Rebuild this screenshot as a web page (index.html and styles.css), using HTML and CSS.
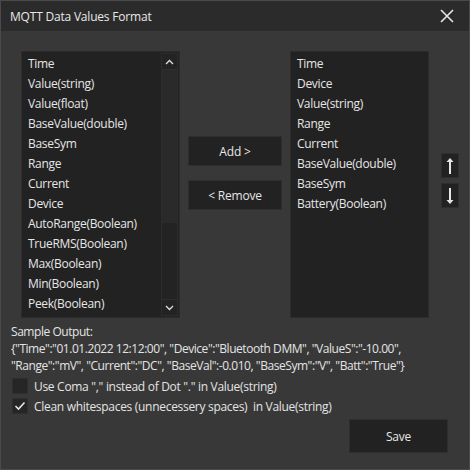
FILE: index.html
```html
<!DOCTYPE html>
<html>
<head>
<meta charset="utf-8">
<link rel="stylesheet" href="styles.css">
</head>
<body>
<div class="window">
  <div class="titlebar">
    <span class="title">MQTT Data Values Format</span>
    <svg class="close" width="14" height="14" viewBox="0 0 14 14"><path d="M1 1 L13 13 M13 1 L1 13" stroke="#e6e6e6" stroke-width="1.6" fill="none"/></svg>
  </div>
  <div class="content">
    <div class="lists">
      <div class="listbox left">
        <div class="items">
          <div class="item">Time</div>
          <div class="item">Value(string)</div>
          <div class="item">Value(float)</div>
          <div class="item">BaseValue(double)</div>
          <div class="item">BaseSym</div>
          <div class="item">Range</div>
          <div class="item">Current</div>
          <div class="item">Device</div>
          <div class="item">AutoRange(Boolean)</div>
          <div class="item">TrueRMS(Boolean)</div>
          <div class="item">Max(Boolean)</div>
          <div class="item">Min(Boolean)</div>
          <div class="item">Peek(Boolean)</div>
        </div>
        <div class="scrollbar">
          <div class="sbtn"><svg width="9" height="6" viewBox="0 0 9 6"><path d="M1 5 L4.5 1.5 L8 5" stroke="#e0e0e0" stroke-width="1.3" fill="none"/></svg></div>
          <div class="thumb"></div>
          <div class="track"></div>
          <div class="sbtn"><svg width="9" height="6" viewBox="0 0 9 6"><path d="M1 1 L4.5 4.5 L8 1" stroke="#e0e0e0" stroke-width="1.3" fill="none"/></svg></div>
        </div>
      </div>
      <div class="midcol">
        <button class="btn">Add &gt;</button>
        <button class="btn">&lt; Remove</button>
      </div>
      <div class="listbox right">
        <div class="items">
          <div class="item">Time</div>
          <div class="item">Device</div>
          <div class="item">Value(string)</div>
          <div class="item">Range</div>
          <div class="item">Current</div>
          <div class="item">BaseValue(double)</div>
          <div class="item">BaseSym</div>
          <div class="item">Battery(Boolean)</div>
        </div>
      </div>
      <div class="movecol">
        <button class="mbtn"><svg width="8" height="18" viewBox="0 0 8 18"><path d="M4 1 L7.5 5 L0.5 5 Z" fill="#e6e6e6"/><rect x="3" y="4" width="2" height="13" fill="#e6e6e6"/></svg></button>
        <button class="mbtn"><svg width="8" height="18" viewBox="0 0 8 18"><path d="M4 17 L7.5 13 L0.5 13 Z" fill="#e6e6e6"/><rect x="3" y="1" width="2" height="13" fill="#e6e6e6"/></svg></button>
      </div>
    </div>
    <div class="sample">
      <div>Sample Output:</div>
      <div>{"Time":"01.01.2022 12:12:00", "Device":"Bluetooth DMM", "ValueS":"-10.00",</div>
      <div>"Range":"mV", "Current":"DC", "BaseVal":-0.010, "BaseSym":"V", "Batt":"True"}</div>
    </div>
    <div class="checks">
      <label class="check"><span class="box"></span><span>Use Coma "," instead of Dot "." in Value(string)</span></label>
      <label class="check"><span class="box"><svg width="12" height="10" viewBox="0 0 12 10"><path d="M1.5 5 L4.5 8 L10.5 1.5" stroke="#e6e6e6" stroke-width="1.6" fill="none"/></svg></span><span>Clean whitespaces (unnecessery spaces)&nbsp; in Value(string)</span></label>
    </div>
    <div class="footer">
      <button class="btn save">Save</button>
    </div>
  </div>
</div>
</body>
</html>
```

FILE: styles.css
```css
* { box-sizing: border-box; }
html, body { margin: 0; padding: 0; background: #383838; }
body {
  font-family: "Open Sans", "Noto Sans", sans-serif;
  font-size: 12px;
  color: #e4e4e4;
}
.window {
  width: 470px;
  height: 470px;
  border: 1px solid #4a4a4a;
  background: #383838;
  display: flex;
  flex-direction: column;
}
.titlebar {
  height: 30px;
  background: #2b2b2b;
  display: flex;
  align-items: center;
  justify-content: space-between;
  padding: 0 15px 0 9px;
  flex: none;
}
.title { font-size: 12px; color: #e8e8e8; letter-spacing: -0.2px; }
.close { display: block; }
.content {
  padding: 20px 0 0 10px;
  display: flex;
  flex-direction: column;
}
.lists {
  display: flex;
  padding-left: 10px;
  height: 267px;
}
.listbox {
  background: #222222;
  border: 1px solid #2c2c2c;
  display: flex;
  height: 267px;
}
.listbox.left { width: 159px; }
.listbox.right { width: 139px; }
.items {
  flex: 1;
  padding: 2px 0 0 6px;
}
.item {
  height: 20px;
  line-height: 20px;
  white-space: nowrap;
  color: #e6e6e6;
  letter-spacing: -0.3px;
}
.scrollbar {
  width: 17px;
  margin: 1px 1px 1px 0;
  border: 1px solid #2c2c2c;
  background: #232323;
  display: flex;
  flex-direction: column;
}
.sbtn {
  height: 16px;
  display: flex;
  align-items: center;
  justify-content: center;
  background: #232323;
  border-bottom: 1px solid #2e2e2e;
}
.sbtn:last-child { border-bottom: none; border-top: 1px solid #2e2e2e; }
.thumb { height: 153px; background: #2a2a2a; }
.track { flex: 1; }
.midcol {
  width: 94px;
  margin: 0 8px;
  padding-top: 85px;
  display: flex;
  flex-direction: column;
  gap: 14px;
}
.btn {
  font-family: inherit;
  font-size: 12px;
  color: #e6e6e6;
  background: #222222;
  border: 1px solid #2e2e2e;
  height: 30px;
  padding: 0;
  letter-spacing: -0.2px;
}
.movecol {
  margin-left: 12px;
  padding-top: 102px;
  display: flex;
  flex-direction: column;
  gap: 5px;
}
.mbtn {
  width: 18px;
  height: 25px;
  padding: 0;
  background: #222222;
  border: 1px solid #2e2e2e;
  display: flex;
  align-items: center;
  justify-content: center;
}
.sample {
  margin-top: 5px;
  line-height: 17px;
  letter-spacing: -0.45px;
  white-space: nowrap;
}
.checks {
  margin-top: 4px;
  padding-left: 1px;
  display: flex;
  flex-direction: column;
  gap: 4px;
}
.check {
  display: flex;
  align-items: center;
  gap: 6px;
  height: 16px;
  letter-spacing: -0.3px;
  white-space: nowrap;
}
.box {
  width: 16px;
  height: 16px;
  background: #262626;
  border: 1px solid #2e2e2e;
  display: flex;
  align-items: center;
  justify-content: center;
  flex: none;
}
.footer {
  display: flex;
  justify-content: flex-end;
  padding-right: 21px;
  margin-top: 5px;
}
.save { width: 99px; height: 34px; }
```
